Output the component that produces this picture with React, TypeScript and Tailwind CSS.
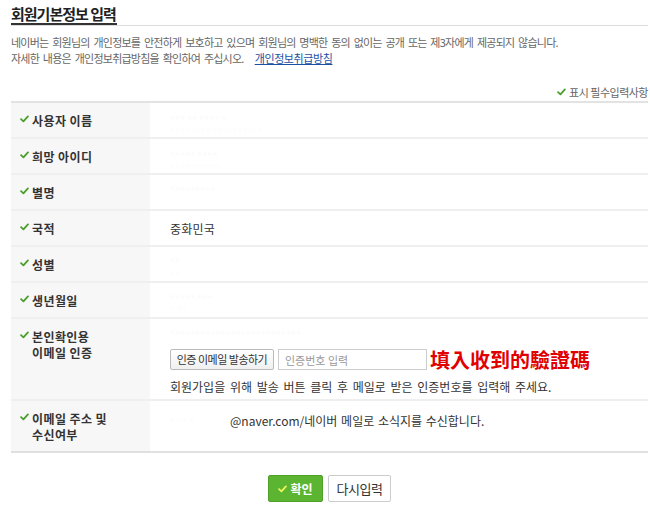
import React from 'react';

const CheckMark = ({ className = '' }: { className?: string }) => (
  <svg viewBox="0 0 10 8" className={className} fill="none">
    <path d="M1.2 4.2 L3.8 6.6 L8.8 1.2" stroke="currentColor" strokeWidth="2" strokeLinecap="round" strokeLinejoin="round" />
  </svg>
);

// 가려진(모자이크된) 값
const Blurred = ({ children, className = '' }: { children: React.ReactNode; className?: string }) => (
  <div className={`text-[9px] leading-[12px] text-[#dcdcdc] blur-[1px] select-none ${className}`}>{children}</div>
);

const Label = ({ lines }: { lines: string[] }) => (
  <div className="bg-[#f7f7f7] pl-[9px] pt-[10px] flex gap-[3px]">
    <CheckMark className="w-[9px] h-[8px] mt-[2px] text-[#4a9e2a] shrink-0" />
    <div className="text-[12px] leading-[16px] font-bold tracking-[0.4px] text-[#333]">
      {lines.map((l) => (
        <div key={l}>{l}</div>
      ))}
    </div>
  </div>
);

const Row = ({ label, height, children }: { label: string[]; height: string; children: React.ReactNode }) => (
  <div className={`grid grid-cols-[139px_1fr] border-b-2 border-[#efefef] ${height}`}>
    <Label lines={label} />
    <div className="pl-[20px] pt-[10px] text-[12px] leading-[16px] text-[#333]">{children}</div>
  </div>
);

export default function App() {
  return (
    <div className="w-[650px] h-[514px] bg-white font-['Noto_Sans_CJK_KR',sans-serif] pl-[11px] pr-[2px] overflow-hidden">
      <div className="border-b border-[#dddddd]">
        <h2 className="inline-block -mb-px pt-[4px] pr-[1px] text-[15px] leading-[19px] font-bold tracking-[-1px] text-[#222] border-b-2 border-[#333]">
          회원기본정보 입력
        </h2>
      </div>

      <div className="mt-[8px] text-[11px] leading-[16px] tracking-[-0.75px] [word-spacing:2px] text-[#666]">
        <p>네이버는 회원님의 개인정보를 안전하게 보호하고 있으며 회원님의 명백한 동의 없이는 공개 또는 제3자에게 제공되지 않습니다.</p>
        <p>
          자세한 내용은 개인정보취급방침을 확인하여 주십시오.
          <a className="ml-[11px] text-[#1a4fa3] underline tracking-[-0.4px]" href="#">개인정보취급방침</a>
        </p>
      </div>

      <div className="mt-[18px] flex justify-end items-center gap-[3px] text-[11px] leading-[16px] tracking-[-0.5px] text-[#666]">
        <CheckMark className="w-[9px] h-[8px] text-[#4a9e2a]" />
        표시 필수입력사항
      </div>

      <div className="mt-px border-t-2 border-[#e3e3e3]">
        <Row label={['사용자 이름']} height="h-[36px]">
          <Blurred className="-mt-[1px]">··· ·· ···· ·</Blurred>
          <Blurred className="opacity-60">········ ··········</Blurred>
        </Row>
        <Row label={['희망 아이디']} height="h-[36px]">
          <Blurred className="-mt-[1px]">····· ····</Blurred>
          <Blurred className="opacity-60">··········</Blurred>
        </Row>
        <Row label={['별명']} height="h-[36px]">
          <Blurred className="-mt-[2px]">·········</Blurred>
        </Row>
        <Row label={['국적']} height="h-[36px]">
          <span className="tracking-[0.2px]">중화민국</span>
        </Row>
        <Row label={['성별']} height="h-[36px]">
          <Blurred className="-mt-[2px]">··</Blurred>
          <Blurred className="opacity-60">··</Blurred>
        </Row>
        <Row label={['생년월일']} height="h-[36px]">
          <Blurred className="-mt-[2px]">····· ···</Blurred>
          <Blurred className="opacity-60">· ··</Blurred>
        </Row>
        <Row label={['본인확인용', '이메일 인증']} height="h-[82px]">
          <Blurred className="-mt-[2px] h-[18px]">··························</Blurred>
          <div className="mt-[4px] flex items-center">
            <button className="h-[21px] w-[104px] border border-[#bbbbbb] rounded-[2px] bg-gradient-to-b from-white to-[#f0f0f0] text-[11px] leading-[19px] tracking-[-0.5px] text-[#333]">
              인증 이메일 발송하기
            </button>
            <input
              className="ml-[4px] h-[21px] w-[149px] border border-[#cccccc] px-[6px] text-[11px] placeholder:text-[#999] outline-none"
              placeholder="인증번호 입력"
            />
            <span className="ml-[3px] font-['Noto_Sans_CJK_TC',sans-serif] font-bold text-[20px] leading-[21px] text-[#e00000]">
              填入收到的驗證碼
            </span>
          </div>
          <p className="mt-[9px] tracking-[0px] [word-spacing:2px]">회원가입을 위해 발송 버튼 클릭 후 메일로 받은 인증번호를 입력해 주세요.</p>
        </Row>
        <div className="grid grid-cols-[139px_1fr] h-[52px] border-b-2 border-[#e0e0e0]">
          <Label lines={['이메일 주소 및', '수신여부']} />
          <div className="pl-[20px] pt-[12px] flex items-center h-[28px] text-[12px] leading-[16px] text-[#333]">
            <Blurred className="w-[60px] opacity-70">· ·· ·</Blurred>
            <span className="tracking-[0px] [word-spacing:1px]">@naver.com/네이버 메일로 소식지를 수신합니다.</span>
          </div>
        </div>
      </div>

      <div className="mt-[22px] flex justify-center gap-[5px]">
        <button className="h-[27px] w-[55px] rounded-[2px] bg-[#5bb530] border border-[#4f9f29] flex items-center justify-center gap-[3px] text-white text-[12px] font-bold">
          <CheckMark className="w-[9px] h-[8px] text-[#eef55a]" />
          확인
        </button>
        <button className="h-[27px] w-[63px] rounded-[2px] bg-white border border-[#cccccc] text-[13px] tracking-[-0.5px] text-[#333]">
          다시입력
        </button>
      </div>
    </div>
  );
}
